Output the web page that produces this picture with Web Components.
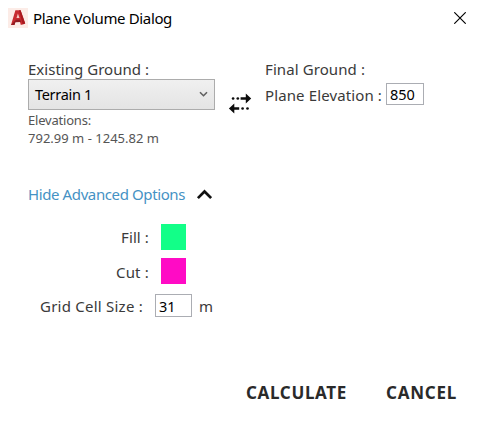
<!DOCTYPE html>
<html lang="en"><head><meta charset="utf-8"><title>Plane Volume Dialog</title>
<style>html,body{margin:0;background:#fff}body{width:480px;height:428px;overflow:hidden;font-family:"Noto Sans","Open Sans",sans-serif;font-size:15px;line-height:20px;color:#3a3a3a}</style></head>
<body><volume-dialog></volume-dialog>
<script>
function define(name, html, setup) {
  const template = document.createElement('template');
  template.innerHTML = html;
  customElements.define(name, class extends HTMLElement {
    constructor() {
      super();
      this.attachShadow({mode: 'open'}).append(template.content.cloneNode(true));
    }
    connectedCallback() { if (setup) setup(this); }
  });
}
// A single line of text tracked to occupy a given width.
define('fit-text', `<style>:host{display:block;white-space:pre;flex:none}span{display:inline-block}</style><span><slot></slot></span>`, el => {
  const w = +el.getAttribute('width');
  const span = el.shadowRoot.querySelector('span');
  el.style.width = w + 'px';
  span.style.letterSpacing = (w - span.getBoundingClientRect().width) / el.textContent.length + 'px';
});
define('app-icon', `<style>:host{display:block;width:20px;height:20px}svg{display:block}</style>
<svg width="20" height="20" viewBox="0 0 20 20"><rect width="20" height="20" fill="#fcece7"/>
<path d="M3 17 7.4 2.2h5.2L17.2 15.6l-4.4 1.3-1-3.6-4.4.4-1 3.3z" fill="#c72b30"/>
<path d="m3 17 5-5.3 4.1-.2 .9 2.5-5.6.3-1 2.7z" fill="#921c22"/>
<path d="m8.5 10 1.4-4.6 1.6 4.6z" fill="#f4c8c2"/><path d="m12.6 2.2 4.6 13.4-2.5.8L11 2.2z" fill="#a9191f"/></svg>`);
define('close-icon', `<style>:host{display:block;width:12px;height:12px}svg{display:block}</style>
<svg width="12" height="12"><path d="M.3.3l11.4 11.4M11.7.3.3 11.7" stroke="#000" stroke-width="1.15" fill="none"/></svg>`);
define('swap-icon', `<style>:host{display:block;width:24px;height:22px}svg{display:block}</style>
<svg width="24" height="22" fill="#0c0c0c"><circle cx="5.1" cy="6.5" r="1.35"/><circle cx="9.8" cy="6.5" r="1.35"/>
<path d="M12.6 5.2h5.2V1.5l5.4 5-5.4 5V7.8h-5.2zM11.2 15.3H6.3v-3.8l-5.4 5 5.4 5v-3.7h4.9z"/>
<circle cx="14.6" cy="16.5" r="1.35"/><circle cx="19.5" cy="16.5" r="1.35"/></svg>`);
define('chevron-up', `<style>:host{display:block;width:16px;height:11px}svg{display:block}</style>
<svg width="16" height="11"><path d="M1.9 9.1 8.5 2.5 15.1 9.1" fill="none" stroke="#111" stroke-width="2.7"/></svg>`);
define('title-bar', `<style>:host{display:flex;align-items:center;height:36px;padding:0 14px 0 8px;color:#000}
fit-text{margin-left:5px}close-icon{margin-left:auto}</style>
<app-icon></app-icon><fit-text width="139">Plane Volume Dialog</fit-text><close-icon></close-icon>`);
define('terrain-select', `<style>:host{display:flex;align-items:center;justify-content:space-between;box-sizing:border-box;width:187px;height:31px;padding:0 6px 2px 6px;border:1px solid #acacac;background:linear-gradient(#f0f0f0,#e4e4e4);color:#000;font-size:14.5px}svg{display:block;margin-top:1px}</style>
<fit-text width="57"></fit-text><svg width="9" height="7"><path d="M1 1.2 4.5 4.7 8 1.2" fill="none" stroke="#606060" stroke-width="1.6"/></svg>`, el => {
  const label = el.shadowRoot.querySelector('fit-text');
  label.textContent = el.textContent;
  label.connectedCallback();
});
define('number-box', `<style>:host{display:block;box-sizing:border-box;width:38px;height:22px;border:1px solid #abadb3;padding:0 3px;line-height:20px;font-size:14.5px;letter-spacing:-.1px;color:#000;background:#fff}</style><slot></slot>`);
define('color-swatch', `<style>:host{display:block;width:25px;height:25.5px;background:var(--swatch)}</style>`);
define('ground-panel', `<style>:host{display:grid;grid-template-columns:187px 24px auto;column-gap:13px;padding:23px 0 0 28px;justify-content:start}
.info{font-size:13px;line-height:18px;color:#555;margin-top:1px}
swap-icon{margin-top:33px}.row{display:flex;align-items:center;gap:4px;margin-top:4px;height:22px}.row fit-text{padding-top:2px}</style>
<div><fit-text width="121">Existing Ground :</fit-text><terrain-select>Terrain 1</terrain-select>
<div class="info"><fit-text width="63">Elevations:</fit-text><fit-text width="131">792.99 m - 1245.82 m</fit-text></div></div>
<swap-icon></swap-icon>
<div><fit-text width="100">Final Ground :</fit-text><div class="row"><fit-text width="117">Plane Elevation :</fit-text><number-box>850</number-box></div></div>`);
define('advanced-options', `<style>:host{display:block;padding:37px 0 0 28px}
.toggle{display:flex;align-items:center;gap:11px;color:#4592c4}
.row{display:flex;align-items:center}.fill,.cut{width:158px;justify-content:flex-end;gap:12px}
.fill{height:26px;margin-top:20px}.cut{height:26px;margin-top:8px}.cut fit-text{padding-top:2px}.grid{margin:9px 0 0 12px;height:24px}.grid fit-text{padding-top:2px}
number-box{width:37px;height:23px;margin:0 7px 0 12px;line-height:22px}</style>
<div class="toggle"><fit-text width="157">Hide Advanced Options</fit-text><chevron-up></chevron-up></div>
<div class="row fill"><fit-text width="28">Fill :</fit-text><color-swatch style="--swatch:#12ff88"></color-swatch></div>
<div class="row cut"><fit-text width="33">Cut :</fit-text><color-swatch style="--swatch:#ff0bc5"></color-swatch></div>
<div class="row grid"><fit-text width="103">Grid Cell Size :</fit-text><number-box>31</number-box><fit-text width="13">m</fit-text></div>`);
define('dialog-actions', `<style>:host{display:flex;justify-content:flex-end;gap:39px;margin-top:auto;padding:0 23px 25px 0;font-size:17px;font-weight:700;color:#2a2a2a}</style>
<fit-text width="101">CALCULATE</fit-text><fit-text width="71">CANCEL</fit-text>`);
define('volume-dialog', `<style>:host{display:flex;flex-direction:column;width:480px;height:428px;background:#fff}</style>
<title-bar></title-bar><ground-panel></ground-panel><advanced-options></advanced-options><dialog-actions></dialog-actions>`);
</script></body></html>
